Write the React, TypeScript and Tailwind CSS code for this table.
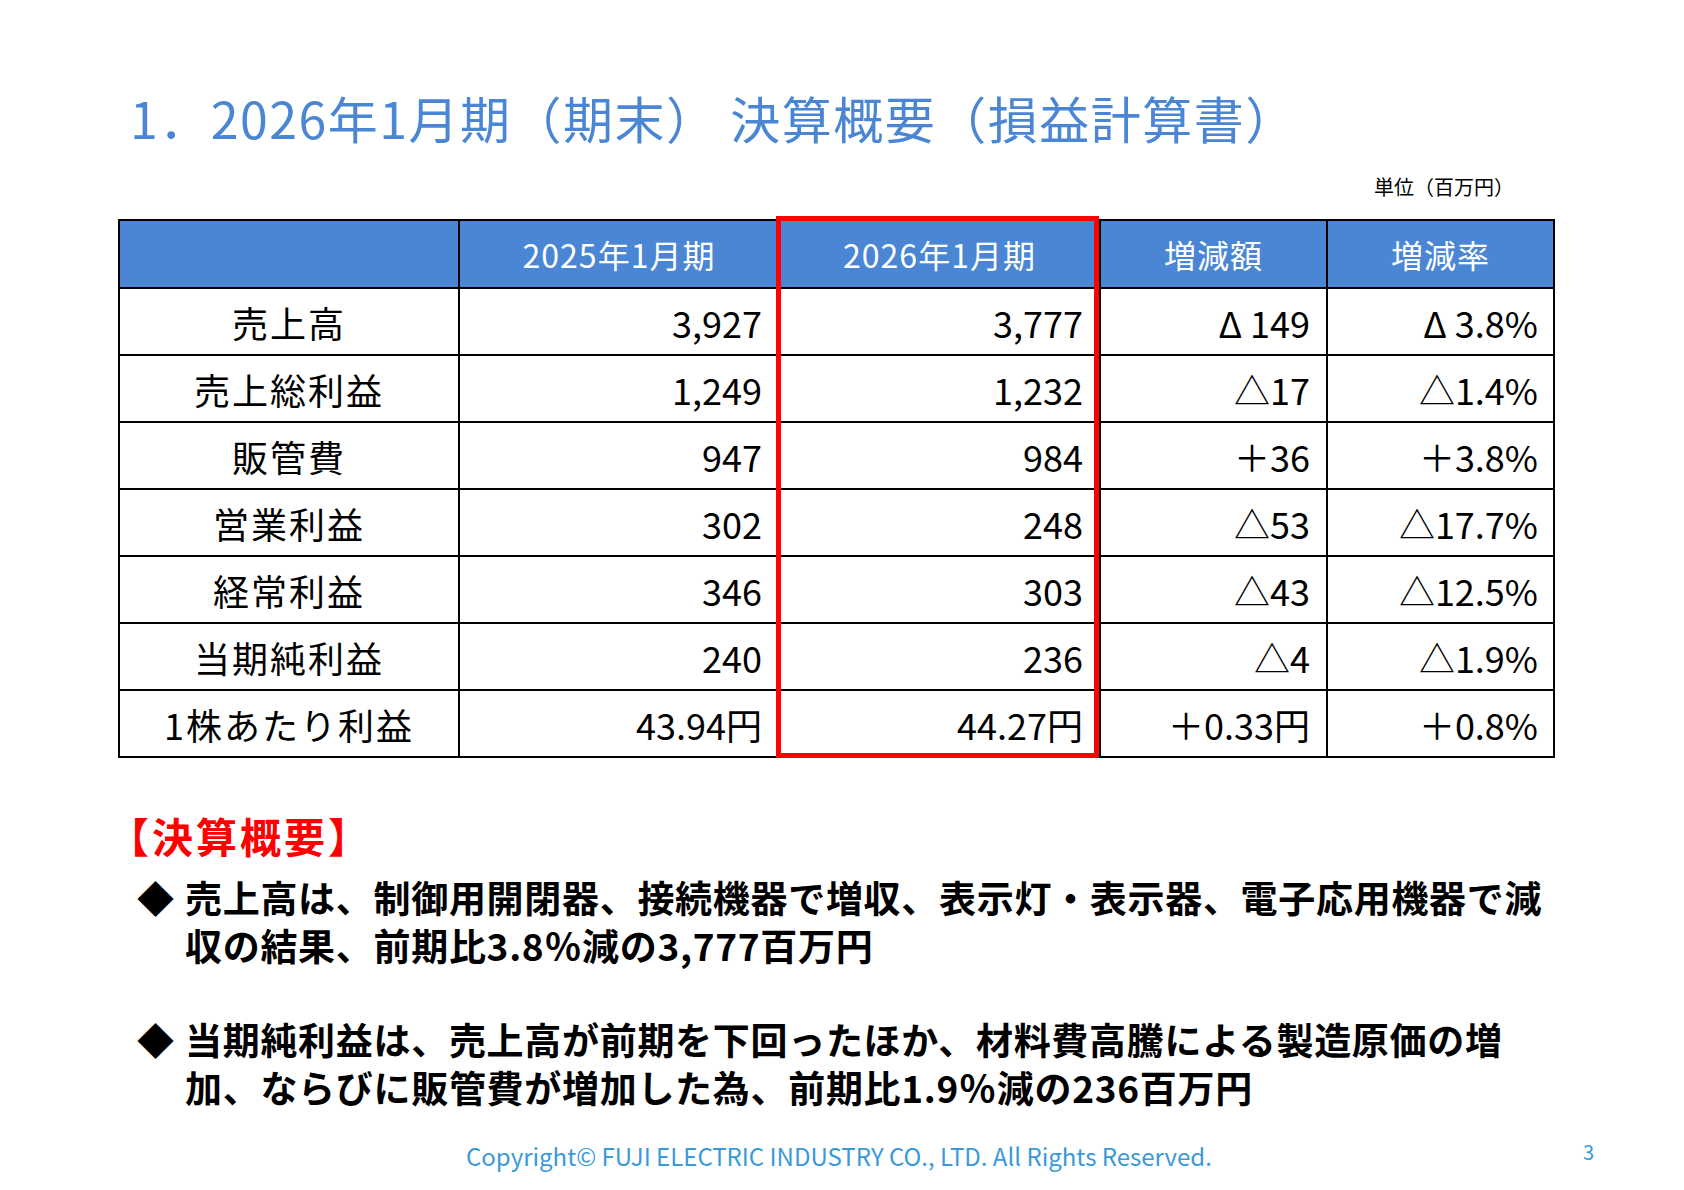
const rows = [
  { label: '売上高', prev: '3,927', cur: '3,777', diff: 'Δ 149', rate: 'Δ 3.8%' },
  { label: '売上総利益', prev: '1,249', cur: '1,232', diff: '△17', rate: '△1.4%' },
  { label: '販管費', prev: '947', cur: '984', diff: '＋36', rate: '＋3.8%' },
  { label: '営業利益', prev: '302', cur: '248', diff: '△53', rate: '△17.7%' },
  { label: '経常利益', prev: '346', cur: '303', diff: '△43', rate: '△12.5%' },
  { label: '当期純利益', prev: '240', cur: '236', diff: '△4', rate: '△1.9%' },
  { label: '1株あたり利益', prev: '43.94円', cur: '44.27円', diff: '＋0.33円', rate: '＋0.8%' },
];

const headers = ['', '2025年1月期', '2026年1月期', '増減額', '増減率'];

export default function App() {
  return (
    <div className="relative h-[1190px] w-[1684px] overflow-hidden bg-white font-['Noto_Sans_CJK_JP','Noto_Sans',sans-serif] text-black">
      <h1 className="whitespace-nowrap pl-[130px] pt-[87px] text-[50px] font-normal leading-[60px] tracking-[1.5px] text-[#4a86d4]">
        1．2026年1月期（期末） 決算概要（損益計算書）
      </h1>

      <div className="mt-[28px] flex justify-end pr-[170px] text-[20px] leading-[24px]">
        単位（百万円）
      </div>

      <div className="relative ml-[118px] mt-[20px] w-[1435px]">
        <table className="w-full table-fixed border-collapse">
          <colgroup>
            <col className="w-[340px]" />
            <col className="w-[320px]" />
            <col className="w-[321px]" />
            <col className="w-[227px]" />
            <col className="w-[227px]" />
          </colgroup>
          <thead>
            <tr className="h-[68px] bg-[#4a86d4]">
              {headers.map((h, i) => (
                <th
                  key={i}
                  className="border-2 border-black text-center text-[32px] font-normal tracking-[1px] text-white"
                >
                  {h}
                </th>
              ))}
            </tr>
          </thead>
          <tbody>
            {rows.map((r) => (
              <tr key={r.label} className="h-[67px] text-[36px]">
                <td className="border-2 border-black text-center tracking-[2px]">{r.label}</td>
                <td className="border-2 border-black pr-[16px] text-right">{r.prev}</td>
                <td className="border-2 border-black pr-[16px] text-right">{r.cur}</td>
                <td className="whitespace-pre border-2 border-black pr-[16px] text-right">{r.diff}</td>
                <td className="whitespace-pre border-2 border-black pr-[15px] text-right">{r.rate}</td>
              </tr>
            ))}
          </tbody>
        </table>
        <div className="pointer-events-none absolute left-[658px] top-[-3px] h-[542px] w-[323px] border-[5px] border-[#ff0000]" />
      </div>

      <div className="mt-[52px] pl-[108px] text-[41px] font-bold leading-[50px] tracking-[3px] text-[#ff0000]">
        【決算概要】
      </div>

      <div className="mt-[13px] flex pl-[137px] text-[37px] font-bold leading-[48px] tracking-[0.7px]">
        <span className="w-[48px] shrink-0">◆</span>
        <p className="whitespace-nowrap">
          売上高は、制御用開閉器、接続機器で増収、表示灯・表示器、電子応用機器で減
          <br />
          収の結果、前期比3.8％減の3,777百万円
        </p>
      </div>

      <div className="mt-[46px] flex pl-[137px] text-[37px] font-bold leading-[48px] tracking-[0.7px]">
        <span className="w-[48px] shrink-0">◆</span>
        <p className="whitespace-nowrap">
          当期純利益は、売上高が前期を下回ったほか、材料費高騰による製造原価の増
          <br />
          加、ならびに販管費が増加した為、前期比1.9％減の236百万円
        </p>
      </div>

      <div className="mt-[28px] flex items-center">
        <p className="ml-[466px] whitespace-nowrap text-[24px] leading-[30px] text-[#3a9ad9]">
          Copyright© FUJI ELECTRIC INDUSTRY CO., LTD. All Rights Reserved.
        </p>
        <span className="mb-[8px] ml-auto mr-[90px] text-[20px] leading-[26px] text-[#3a9ad9]">3</span>
      </div>
    </div>
  );
}
